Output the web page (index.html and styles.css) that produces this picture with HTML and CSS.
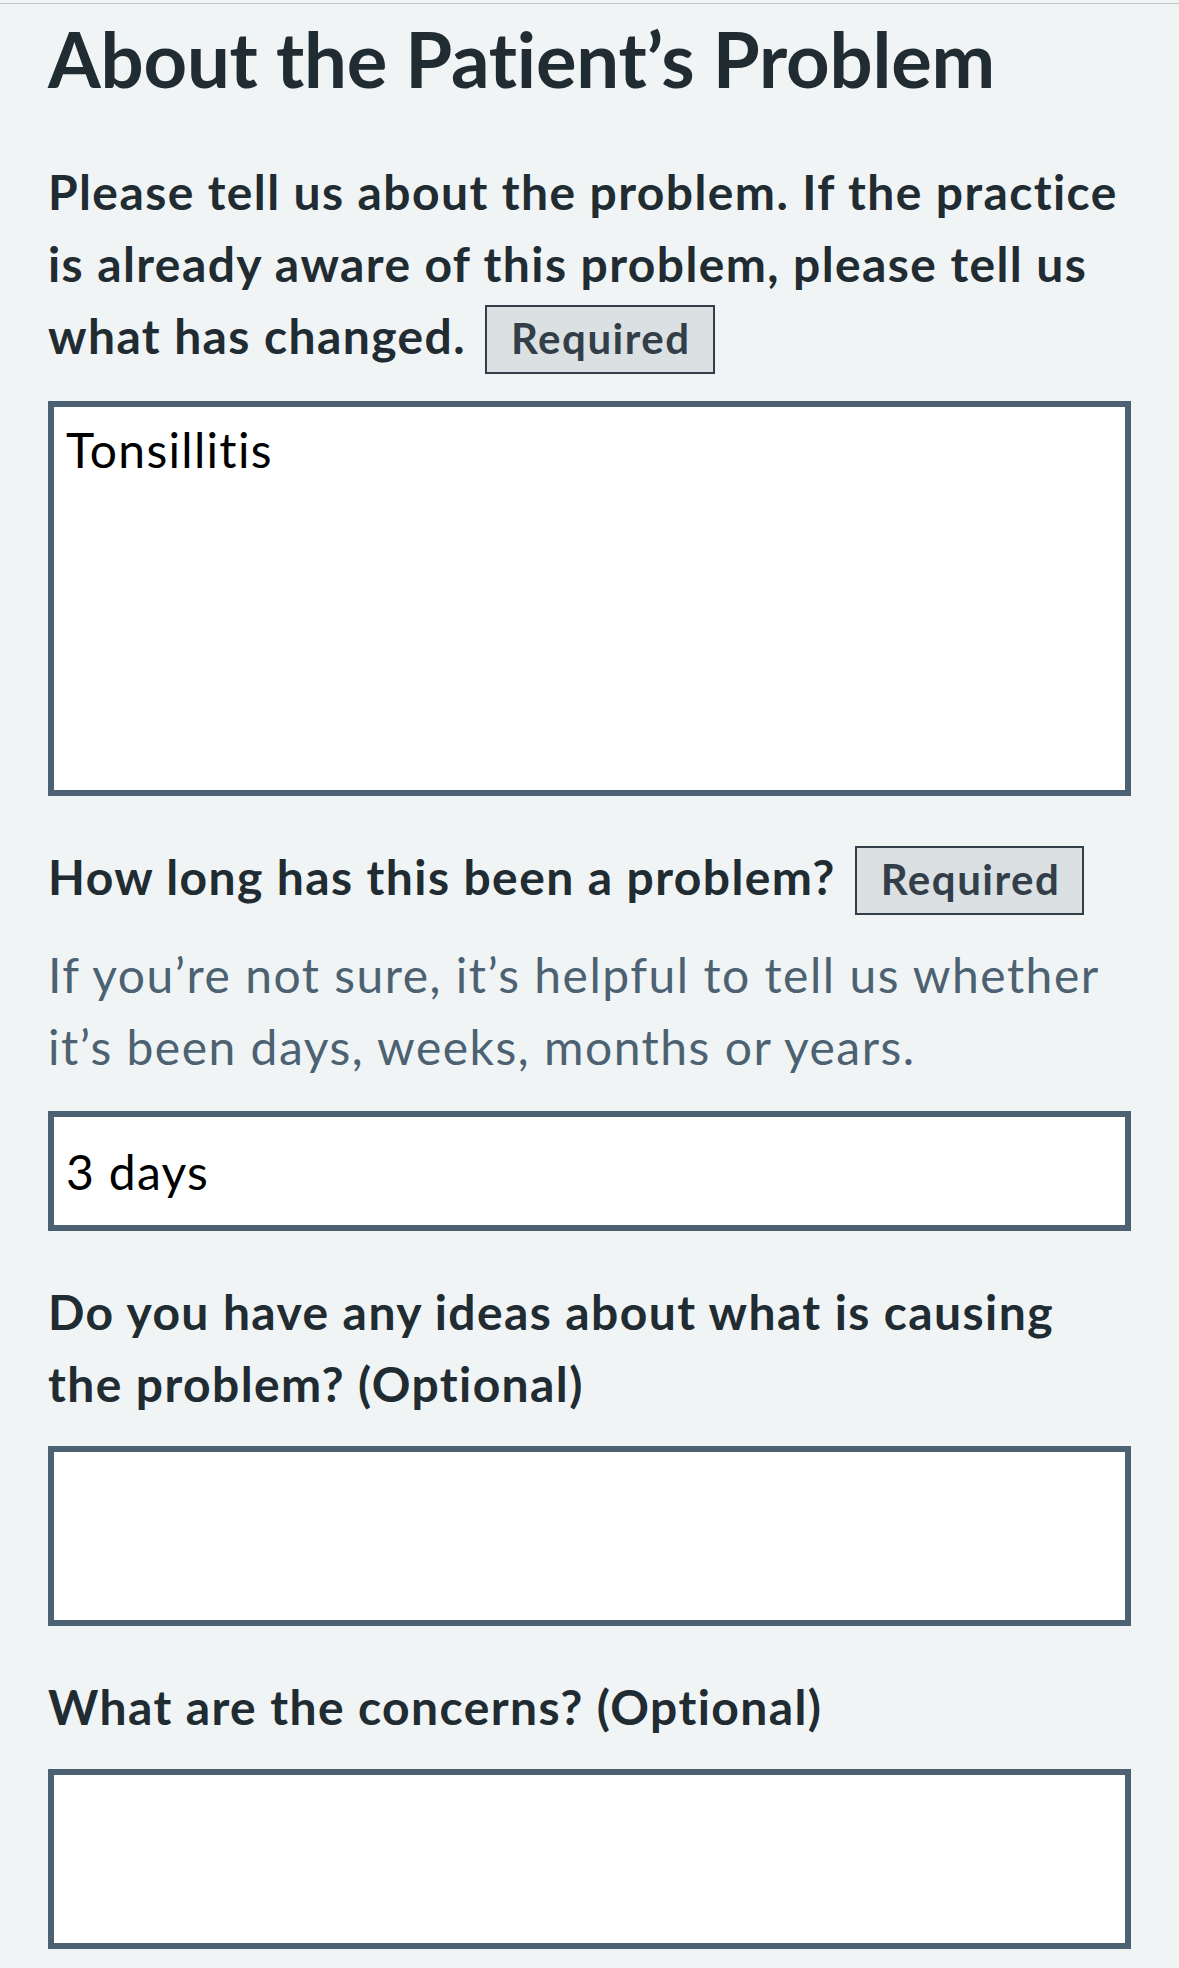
FILE: index.html
```html
<!DOCTYPE html>
<html lang="en">
<head>
<meta charset="utf-8">
<title>About the Patient’s Problem</title>
<link rel="stylesheet" href="styles.css">
</head>
<body>
<div class="topline"></div>
<main class="page">
  <h1 class="title">About the Patient’s Problem</h1>

  <div class="group">
    <label class="label label--tagged" for="problem">Please tell us about the problem. If the practice is already aware of this problem, please tell us what has changed. <strong class="tag">Required</strong></label>
    <textarea class="field field--tall" id="problem">Tonsillitis</textarea>
  </div>

  <div class="group">
    <label class="label" for="duration">How long has this been a problem? <strong class="tag">Required</strong></label>
    <div class="hint">If you’re not sure, it’s helpful to tell us whether it’s been days, weeks, months or years.</div>
    <input class="field field--input" id="duration" type="text" value="3 days">
  </div>

  <div class="group">
    <label class="label" for="ideas">Do you have any ideas about what is causing the problem? (Optional)</label>
    <textarea class="field field--short" id="ideas"></textarea>
  </div>

  <div class="group">
    <label class="label" for="concerns">What are the concerns? (Optional)</label>
    <textarea class="field field--short" id="concerns"></textarea>
  </div>
</main>
</body>
</html>
```
FILE: styles.css
```css
html, body {
  margin: 0;
  padding: 0;
  background: #f0f4f5;
}

body {
  font-family: Lato, "Open Sans", sans-serif;
  color: #212b32;
}

.topline {
  margin-top: 3px;
  height: 1px;
  background: #c2c4c6;
}

.page {
  padding: 0 48px;
}

.title {
  margin: 11px 0 53px;
  font-size: 76px;
  line-height: 88px;
  font-weight: 700;
  letter-spacing: -0.2px;
  color: #212b32;
}

.group {
  margin-bottom: 45px;
}

.label {
  display: block;
  font-size: 48px;
  line-height: 72px;
  font-weight: 700;
  letter-spacing: 1.4px;
  color: #212b32;
  margin-bottom: 26px;
}

.label--tagged {
  margin-bottom: 29px;
}

.tag {
  display: inline;
  font-size: 42px;
  line-height: 48px;
  font-weight: 700;
  letter-spacing: 1.5px;
  color: #333f48;
  background: #dbe0e3;
  border: 2px solid #333f48;
  padding: 6px 22px 9px 24px;
  margin-left: 6px;
}

.hint {
  font-size: 48px;
  line-height: 72px;
  font-weight: 400;
  letter-spacing: 1.5px;
  color: #4c6272;
  margin: 24px 0 28px;
}

.field {
  display: block;
  box-sizing: border-box;
  width: 100%;
  margin: 0;
  border: 6px solid #4c6272;
  border-radius: 0;
  background: #ffffff;
  color: #000000;
  font-family: Lato, "Open Sans", sans-serif;
  font-size: 48px;
  font-weight: 400;
  letter-spacing: 1.3px;
  outline: none;
  resize: none;
  -webkit-appearance: none;
  appearance: none;
}

textarea.field {
  line-height: 72px;
  padding: 7px 12px;
  overflow: hidden;
}

.field--tall {
  height: 395px;
}

.field--short {
  height: 180px;
}

.field--input {
  height: 120px;
  padding: 0 12px;
  line-height: normal;
}
```
